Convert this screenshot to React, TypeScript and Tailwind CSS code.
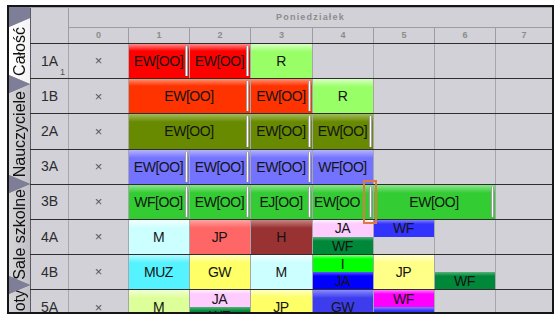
import type React from 'react';

type Part = { t: string; c: string; bar?: boolean; left?: boolean };
type Cell = null | { span?: 2; full?: Part; top?: Part | null; bottom?: Part | null };
type Row = { name: string; sub?: string; cells: Cell[] };

// lesson colours (glossy top band)
const RED = 'bg-[linear-gradient(#ff8c8c,#ff0000_7px)]';
const ORANGE = 'bg-[linear-gradient(#ff9070,#ff3300_7px)]';
const LIME = 'bg-[linear-gradient(#d8ffc4,#99ff66_8px)]';
const OLIVE = 'bg-[linear-gradient(#a4bb5c,#678a00_8px)]';
const VIOLET = 'bg-[linear-gradient(#b4b4ff,#7373ff_8px)]';
const GREEN = 'bg-[linear-gradient(#8ce48c,#33cc33_8px)]';
const LCYAN = 'bg-[linear-gradient(#f4ffff,#ccffff_8px)]';
const SALMON = 'bg-[linear-gradient(#ffa3a3,#ff6666_8px)]';
const BROWN = 'bg-[linear-gradient(#c98484,#993333_8px)]';
const CYAN = 'bg-[linear-gradient(#b0fbff,#55f2ff_8px)]';
const YELLOW = 'bg-[linear-gradient(#ffffc0,#ffff66_8px)]';
const LYELLOW = 'bg-[linear-gradient(#ffffcc,#ffff88_8px)]';
const YGREEN = 'bg-[linear-gradient(#f2ffd6,#ddff99_8px)]';
const GWBLUE = 'bg-[linear-gradient(#8a8aff,#3d3dee_8px)]';
const PINK_H = 'bg-[linear-gradient(#fff0ff,#ffccff_4px)]';
const DGREEN_H = 'bg-[linear-gradient(#55b37a,#00883a_4px)]';
const BLUE_H = 'bg-[linear-gradient(#8080ff,#3333ff_4px)]';
const BGREEN_H = 'bg-[linear-gradient(#80ff80,#00ff00_4px)]';
const PBLUE_H = 'bg-[linear-gradient(#5a5aff,#0000ff_4px)]';
const MAGENTA_H = 'bg-[linear-gradient(#ff80ff,#ff00ff_4px)]';

const ew = (c: string): Part => ({ t: 'EW[OO]', c, bar: true });

const rows: Row[] = [
	{
		name: '1A',
		sub: '1',
		cells: [{ full: ew(RED) }, { full: ew(RED) }, { full: { t: 'R', c: LIME } }, null, null, null, null],
	},
	{
		name: '1B',
		cells: [{ span: 2, full: ew(ORANGE) }, { full: ew(ORANGE) }, { full: { t: 'R', c: LIME } }, null, null, null],
	},
	{
		name: '2A',
		cells: [{ span: 2, full: ew(OLIVE) }, { full: ew(OLIVE) }, { full: ew(OLIVE) }, null, null, null],
	},
	{
		name: '3A',
		cells: [
			{ full: ew(VIOLET) },
			{ full: ew(VIOLET) },
			{ full: ew(VIOLET) },
			{ full: { t: 'WF[OO]', c: VIOLET } },
			null,
			null,
			null,
		],
	},
	{
		name: '3B',
		cells: [
			{ full: { t: 'WF[OO]', c: GREEN, bar: true } },
			{ full: ew(GREEN) },
			{ full: { t: 'EJ[OO]', c: GREEN, bar: true } },
			{ full: { t: 'EW[OO', c: GREEN, bar: true, left: true } },
			{ span: 2, full: ew(GREEN) },
			null,
		],
	},
	{
		name: '4A',
		cells: [
			{ full: { t: 'M', c: LCYAN } },
			{ full: { t: 'JP', c: SALMON } },
			{ full: { t: 'H', c: BROWN } },
			{ top: { t: 'JA', c: PINK_H }, bottom: { t: 'WF', c: DGREEN_H } },
			{ top: { t: 'WF', c: BLUE_H }, bottom: null },
			null,
			null,
		],
	},
	{
		name: '4B',
		cells: [
			{ full: { t: 'MUZ', c: CYAN } },
			{ full: { t: 'GW', c: YELLOW } },
			{ full: { t: 'M', c: LCYAN } },
			{ top: { t: 'I', c: BGREEN_H }, bottom: { t: 'JA', c: PBLUE_H } },
			{ full: { t: 'JP', c: LYELLOW } },
			{ top: null, bottom: { t: 'WF', c: DGREEN_H } },
			null,
		],
	},
	{
		name: '5A',
		cells: [
			{ full: { t: 'M', c: YGREEN } },
			{ top: { t: 'JA', c: PINK_H }, bottom: { t: 'WF', c: DGREEN_H } },
			{ full: { t: 'JP', c: YELLOW } },
			{ full: { t: 'GW', c: GWBLUE } },
			{ top: { t: 'WF', c: MAGENTA_H }, bottom: { t: '', c: BLUE_H } },
			null,
			null,
		],
	},
];

const GRID = 'grid grid-cols-[38px_60px_61px_61px_62px_61px_61px_61px_1fr]';

const Block: React.FC<{ part: Part }> = ({ part }) => (
	<div
		className={`relative flex flex-1 basis-0 items-center overflow-hidden whitespace-nowrap text-[14px] leading-none tracking-[-0.45px] text-[#141414] ${
			part.left ? 'justify-start pl-[1px]' : 'justify-center pr-[1px]'
		} ${part.c}`}
	>
		{part.t}
		{part.bar && (
			<span className="absolute top-[2px] right-[1px] bottom-[2px] w-[3px] border-x border-[#a0a0a0] bg-white" />
		)}
	</div>
);

const Slot: React.FC<{ cell: Cell }> = ({ cell }) => {
	if (!cell) return <div className="border-l border-[#a6a6ac]" />;
	return (
		<div className={`flex min-w-0 flex-col border-l border-[#a6a6ac] ${cell.span === 2 ? 'col-span-2' : ''}`}>
			{cell.full ? (
				<Block part={cell.full} />
			) : (
				<>
					{cell.top ? <Block part={cell.top} /> : <div className="flex-1 basis-0" />}
					{cell.bottom ? <Block part={cell.bottom} /> : <div className="flex-1 basis-0" />}
				</>
			)}
		</div>
	);
};

const Tab: React.FC<{ label: string; h: string; active?: boolean }> = ({ label, h, active }) => (
	<div
		className={`${h} flex shrink-0 items-center justify-center [clip-path:polygon(0_9px,100%_0,100%_100%,0_calc(100%_-_9px))] ${
			active
				? 'bg-[linear-gradient(90deg,#ffffff,#f3f3f5)]'
				: 'bg-[linear-gradient(90deg,#d6d6da,#c0c0c6)]'
		}`}
	>
		<span className="rotate-180 whitespace-nowrap text-[16px] leading-none text-[#111] [writing-mode:vertical-rl]">
			{label}
		</span>
	</div>
);

export default function App() {
	return (
		<div className="min-h-[322px] w-[560px] bg-white pt-[5px] pl-[7px] font-['Liberation_Sans',Arial,sans-serif]">
			<div className="flex h-[309px] w-[547px] overflow-hidden border-2 border-[#151515] bg-[#d2d1d7]">
				{/* vertical tabs */}
				<div className="flex w-[21px] shrink-0 flex-col bg-[#7e7e98]">
					<div className="h-[11px] shrink-0" />
					<div className="flex flex-col [filter:drop-shadow(0_0_0.7px_#2c2c38)]">
						<Tab label="Całość" h="h-[66px]" active />
						<Tab label="Nauczyciele" h="h-[100px]" />
						<Tab label="Sale szkolne" h="h-[101px]" />
						<Tab label="Przedmioty" h="h-[90px]" />
					</div>
				</div>

				{/* timetable */}
				<div className="flex min-w-0 flex-1 flex-col">
					<div className={`${GRID} h-[36px] shrink-0 grid-rows-[20px_16px] border-t border-[#a4a4a8]`}>
						<div className="row-span-2 border-l border-[#5a5a64]" />
						<div className="col-span-8 flex items-center justify-center border-b border-l border-[#9c9ca2] text-[9px] font-bold tracking-[1.2px] text-[#8c8c8c]">
							Poniedziałek
						</div>
						{[0, 1, 2, 3, 4, 5, 6, 7].map((n) => (
							<div
								key={n}
								className="flex items-center justify-center border-l border-[#9c9ca2] text-[9px] font-bold text-[#8c8c8c]"
							>
								{n}
							</div>
						))}
					</div>

					{rows.map((row) => (
						<div
							key={row.name}
							className={`${GRID} relative h-[35.2px] shrink-0 border-t border-[#2e2e2e]`}
						>
							<div className="relative flex items-center border-l border-[#5a5a64] pl-[10px] text-[14px] text-[#2c2c2c]">
								{row.name}
								{row.sub && (
									<span className="absolute right-[3px] bottom-[1px] text-[9px] leading-none text-[#555]">
										{row.sub}
									</span>
								)}
							</div>
							<div className="flex items-center justify-center border-l border-[#a6a6ac] text-[13px] text-[#555]">
								×
							</div>
							{row.cells.map((cell, i) => (
								<Slot key={i} cell={cell} />
							))}
							{row.name === '3B' && (
								<div className="absolute top-[-5px] left-[333px] z-10 h-[44px] w-[14px] border-2 border-[#e07a3c]" />
							)}
						</div>
					))}
				</div>
			</div>
		</div>
	);
}
